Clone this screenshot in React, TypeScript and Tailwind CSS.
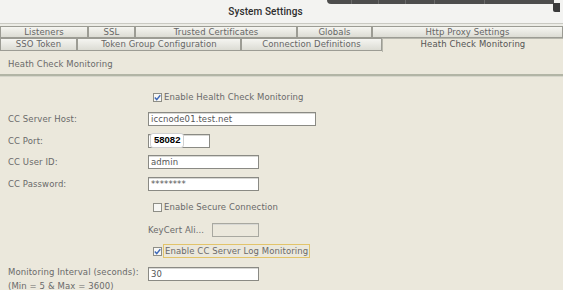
import React from 'react';

const tabsTop = [
  { label: 'Listeners', w: 88 },
  { label: 'SSL', w: 47 },
  { label: 'Trusted Certificates', w: 162 },
  { label: 'Globals', w: 75 },
  { label: 'Http Proxy Settings', w: 191 },
];

const tabsBottom = [
  { label: 'SSO Token', w: 77 },
  { label: 'Token Group Configuration', w: 164 },
  { label: 'Connection Definitions', w: 141 },
  { label: 'Heath Check Monitoring', w: 181, active: true },
];

const Check = ({ checked }: { checked: boolean }) => (
  <span className="inline-flex h-[9px] w-[9px] items-center justify-center border border-[#8e8e86] bg-[#f7f7f4] shrink-0">
    {checked && (
      <svg width="7" height="7" viewBox="0 0 7 7">
        <path d="M0.8 3.6 L2.7 5.6 L6.3 1.2" fill="none" stroke="#3d68b8" strokeWidth="1.4" />
      </svg>
    )}
  </span>
);

const Field = ({ value, w, disabled }: { value?: string; w: number; disabled?: boolean }) => (
  <div
    className={`h-[14px] border shadow-[inset_0_1px_0_#d8d8d4] flex items-center px-[2px] text-[#555] ${
      disabled ? 'bg-[#ebe8dc] border-[#a8a8a0]' : 'bg-white border-[#8a8a84]'
    }`}
    style={{ width: w }}
  >
    {value}
  </div>
);

export default function App() {
  return (
    <div
      className="relative w-[563px] h-[290px] overflow-hidden bg-[#ebe8dc] text-[8.5px] text-[#6a6a6a] tracking-[0.1px]"
      style={{ fontFamily: '"DejaVu Sans", Verdana, sans-serif' }}
    >
      {/* title bar */}
      <div className="h-[24px] bg-[#f3f3f1] border-b border-[#c9c9c2] flex items-center justify-center pr-[32px]">
        <span
          className="text-[10px] font-medium text-[#2e2e2e]"
          style={{ fontFamily: 'Roboto, "Noto Sans", sans-serif' }}
        >
          System Settings
        </span>
      </div>
      <div className="absolute top-0 left-[327px] w-[227px] h-[4px] bg-[#4d4d4d] rounded-bl-[4px] flex">
        {[25, 27, 27, 29, 50].map((w, i) => (
          <div key={i} className="h-full border-r border-[#6a6a6a]" style={{ width: w }} />
        ))}
      </div>
      <div className="absolute top-[3px] right-[3px] w-[7px] h-[9px] bg-[#3a3a3a] rounded-bl-[2px]" />

      <div className="h-[2px] bg-[#ecece6]" />

      {/* tabs */}
      <div className="flex h-[12px]">
        {tabsTop.map((t) => (
          <div
            key={t.label}
            className="h-full border border-[#9c9c94] bg-gradient-to-b from-[#f5f5f1] to-[#dcdcd4] flex items-center justify-center leading-none text-[#666]"
            style={{ width: t.w }}
          >
            {t.label}
          </div>
        ))}
      </div>
      <div className="flex h-[14px]">
        {tabsBottom.map((t) =>
          t.active ? (
            <div
              key={t.label}
              className="h-full border-t border-l border-[#b8b8ae] bg-[#ebe8dc] flex items-start justify-center pt-[1px] leading-none text-[#555]"
              style={{ width: t.w }}
            >
              {t.label}
            </div>
          ) : (
            <div
              key={t.label}
              className="h-[13px] border border-[#9c9c94] bg-gradient-to-b from-[#f5f5f1] to-[#dcdcd4] flex items-center justify-center leading-none text-[#666]"
              style={{ width: t.w }}
            >
              {t.label}
            </div>
          )
        )}
      </div>

      {/* section */}
      <div className="h-[22px] flex items-center pl-[8px] pt-[2px]">Heath Check Monitoring</div>
      <div className="h-[2px] bg-[#b2b5a6]" />
      <div className="h-[1px] bg-[#d6d6cb]" />

      <div className="pl-[8px]">
        <div className="mt-[13px] h-[14px] flex items-center pl-[145px] gap-[2px]">
          <Check checked />
          <span>Enable Health Check Monitoring</span>
        </div>

        <div className="mt-[8px] flex items-center h-[14px]">
          <div className="w-[140px]">CC Server Host:</div>
          <Field value="iccnode01.test.net" w={168} />
        </div>

        <div className="mt-[8px] flex items-center h-[14px]">
          <div className="w-[140px]">CC Port:</div>
          <div className="relative">
            <Field w={62} />
            <span
              className="absolute left-[2px] top-[-1px] h-[15px] px-[3px] flex items-center rounded-[3px] bg-white border border-[#d0d0d0] text-[9.5px] font-bold text-black tracking-normal"
              style={{ fontFamily: '"Liberation Sans", Arial, sans-serif' }}
            >
              58082
            </span>
          </div>
        </div>

        <div className="mt-[7px] flex items-center h-[14px]">
          <div className="w-[140px]">CC User ID:</div>
          <Field value="admin" w={111} />
        </div>

        <div className="mt-[8px] flex items-center h-[14px]">
          <div className="w-[140px]">CC Password:</div>
          <Field value="********" w={111} />
        </div>

        <div className="mt-[9px] h-[14px] flex items-center pl-[145px] gap-[2px]">
          <Check checked={false} />
          <span>Enable Secure Connection</span>
        </div>

        <div className="mt-[9px] h-[14px] flex items-center pl-[140px]">
          <span className="w-[64px]">KeyCert Ali...</span>
          <Field w={47} disabled />
        </div>

        <div className="mt-[7px] h-[14px] flex items-center pl-[145px] gap-[1px]">
          <Check checked />
          <span className="h-[14px] flex items-center px-[1px] border border-[#e2c46a]">Enable CC Server Log Monitoring</span>
        </div>

        <div className="mt-[7px] flex items-start">
          <div className="w-[140px] leading-[14px]">
            <div>Monitoring Interval (seconds):</div>
            <div>(Min = 5 &amp; Max = 3600)</div>
          </div>
          <div className="mt-[2px]">
            <Field value="30" w={111} />
          </div>
        </div>
      </div>
    </div>
  );
}
